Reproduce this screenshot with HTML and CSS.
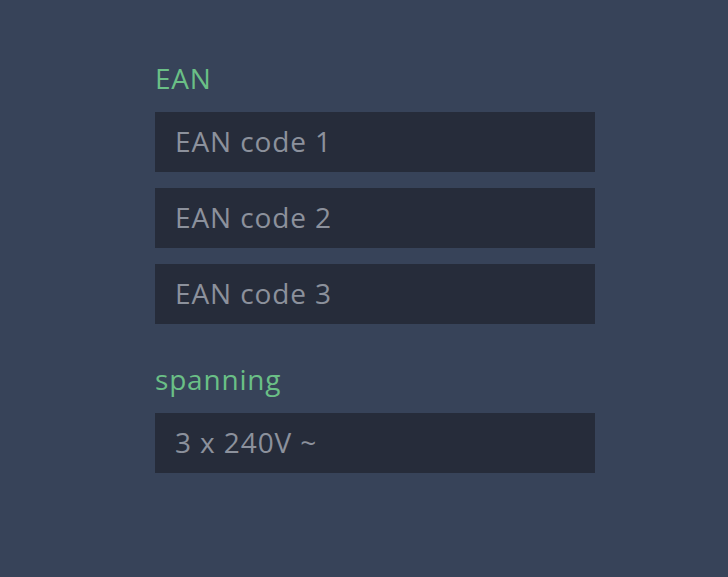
FILE: index.html
```html
<!DOCTYPE html>
<html>
<head>
<meta charset="utf-8">
<link rel="stylesheet" href="styles.css">
</head>
<body>
<main class="form">
  <section class="group">
    <label class="label">EAN</label>
    <input class="field" type="text" placeholder="EAN code 1">
    <input class="field" type="text" placeholder="EAN code 2">
    <input class="field" type="text" placeholder="EAN code 3">
  </section>
  <section class="group">
    <label class="label">spanning</label>
    <input class="field" type="text" placeholder="3 x 240V ~">
  </section>
</main>
</body>
</html>
```
FILE: styles.css
```css
html, body {
  margin: 0;
  padding: 0;
  background: #374359;
  height: 100%;
}
body {
  font-family: "Open Sans", "Noto Sans", sans-serif;
}
.form {
  width: 440px;
  margin-left: 155px;
  padding-top: 60px;
  display: flex;
  flex-direction: column;
  gap: 37px;
}
.group {
  display: flex;
  flex-direction: column;
  gap: 16px;
}
.label {
  color: #6abf86;
  font-size: 28px;
  line-height: 36px;
  letter-spacing: 0.8px;
}
.field {
  box-sizing: border-box;
  width: 440px;
  height: 60px;
  border: none;
  outline: none;
  background: #262c3a;
  padding: 0 20px 3px;
  font-family: inherit;
  font-size: 28px;
  letter-spacing: 0.9px;
  color: #8c919c;
}
.field::placeholder {
  color: #8c919c;
  opacity: 1;
}
```
